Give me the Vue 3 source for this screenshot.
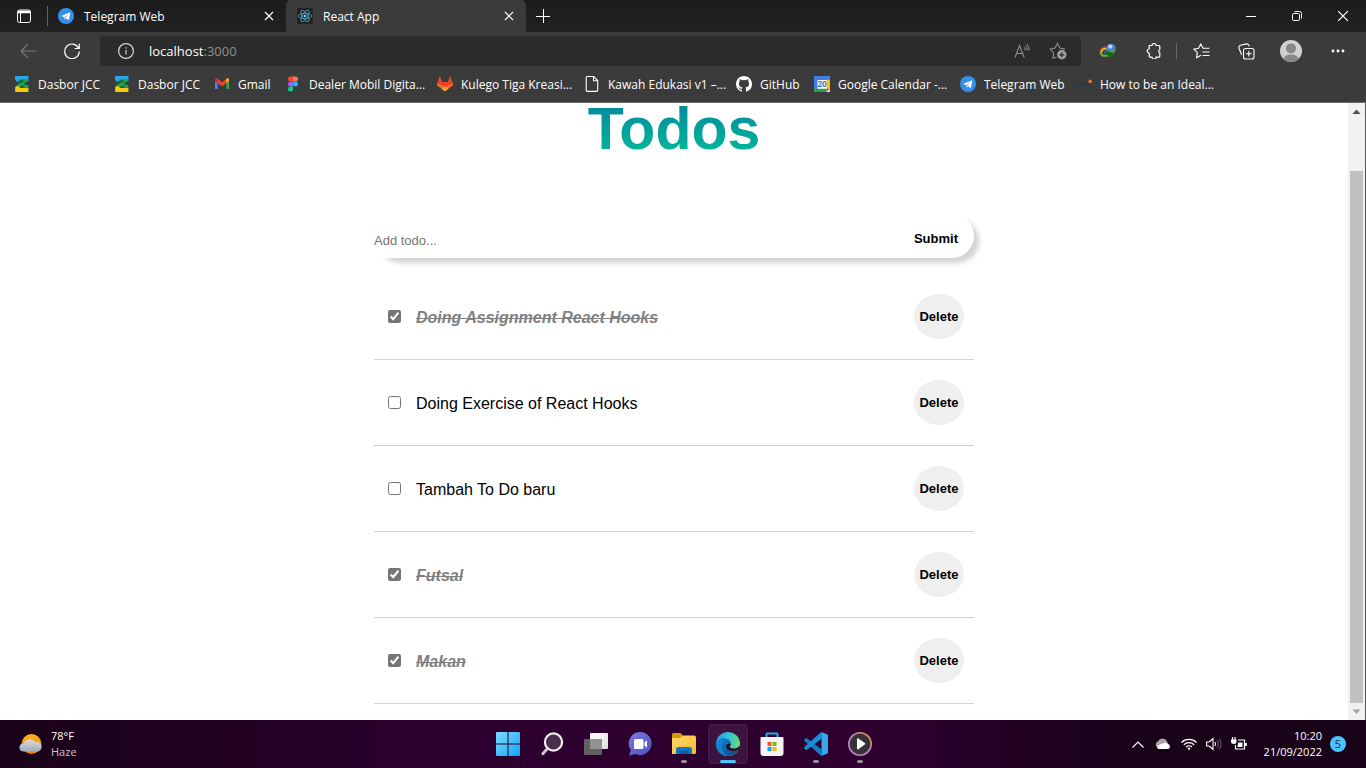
<script setup>
import { ref } from 'vue'

const bookmarks = [
  { icon: 'jcc', label: 'Dasbor JCC' },
  { icon: 'jcc', label: 'Dasbor JCC' },
  { icon: 'gmail', label: 'Gmail' },
  { icon: 'figma', label: 'Dealer Mobil Digita...' },
  { icon: 'gitlab', label: 'Kulego Tiga Kreasi...' },
  { icon: 'page', label: 'Kawah Edukasi v1 –...' },
  { icon: 'github', label: 'GitHub' },
  { icon: 'calendar', label: 'Google Calendar -...' },
  { icon: 'telegram', label: 'Telegram Web' },
  { icon: 'ideal', label: 'How to be an Ideal...' }
]

const draft = ref('')
const todos = ref([
  { id: 1, text: 'Doing Assignment React Hooks', done: true },
  { id: 2, text: 'Doing Exercise of React Hooks', done: false },
  { id: 3, text: 'Tambah To Do baru', done: false },
  { id: 4, text: 'Futsal', done: true },
  { id: 5, text: 'Makan', done: true }
])

function addTodo() {
  const text = draft.value.trim()
  if (!text) return
  todos.value.push({ id: Date.now(), text, done: false })
  draft.value = ''
}

function removeTodo(id) {
  todos.value = todos.value.filter((t) => t.id !== id)
}
</script>

<template>
  <div class="screen">
    <header class="browser">
      <div class="tabstrip">
        <button class="tab-menu" aria-label="Tab actions">
          <svg width="16" height="16" viewBox="0 0 16 16" fill="none" stroke="#fff">
            <rect x="1.5" y="2" width="13" height="12.5" rx="2" />
            <path d="M2 3.5h12M2 4.5h12" stroke-width="1.4" />
            <path d="M4.5 5v9" />
          </svg>
        </button>
        <div class="tab">
          <svg width="16" height="16" viewBox="0 0 16 16">
            <circle cx="8" cy="8" r="8" fill="#3390ec" />
            <path d="M3 8.1 12.4 4.2 10.9 12.2 8 10.2 6.6 11.6 6.4 9.3z" fill="#fff" />
            <path d="M6.4 9.3 10.3 6.3 7.2 9.8z" fill="#3390ec" />
          </svg>
          <span class="tab-title">Telegram Web</span>
          <button class="tab-close" aria-label="Close tab">
            <svg width="10" height="10" viewBox="0 0 10 10" stroke="#fff" stroke-width="1.2"><path d="M1 1l8 8M9 1l-8 8" /></svg>
          </button>
        </div>
        <div class="tab active">
          <svg width="16" height="16" viewBox="0 0 16 16" fill="none" stroke="#4fa9c4" stroke-width="0.8">
            <rect width="16" height="16" rx="2" fill="#222" stroke="none" />
            <ellipse cx="8" cy="8" rx="6.6" ry="2.6" />
            <ellipse cx="8" cy="8" rx="6.6" ry="2.6" transform="rotate(60 8 8)" />
            <ellipse cx="8" cy="8" rx="6.6" ry="2.6" transform="rotate(120 8 8)" />
            <circle cx="8" cy="8" r="1.3" fill="#61dafb" stroke="none" />
          </svg>
          <span class="tab-title">React App</span>
          <button class="tab-close" aria-label="Close tab">
            <svg width="10" height="10" viewBox="0 0 10 10" stroke="#fff" stroke-width="1.2"><path d="M1 1l8 8M9 1l-8 8" /></svg>
          </button>
        </div>
        <button class="new-tab" aria-label="New tab">
          <svg width="14" height="14" viewBox="0 0 14 14" stroke="#fff"><path d="M7.5 0v14M0 7.5h14" /></svg>
        </button>
        <div class="window-controls">
          <button aria-label="Minimize">
            <svg width="10" height="10" viewBox="0 0 10 10" stroke="#fff"><path d="M0 5.5h10" /></svg>
          </button>
          <button aria-label="Restore">
            <svg width="10" height="10" viewBox="0 0 10 10" fill="none" stroke="#fff">
              <rect x=".5" y="2.5" width="7" height="7" rx="1.2" />
              <path d="M2.6.5h5a2 2 0 0 1 2 2v5" />
            </svg>
          </button>
          <button aria-label="Close">
            <svg width="10" height="10" viewBox="0 0 10 10" stroke="#fff" stroke-width="1.2"><path d="M0 0l10 10M10 0L0 10" /></svg>
          </button>
        </div>
      </div>

      <div class="toolbar">
        <button class="nav-button" aria-label="Back">
          <svg width="16" height="16" viewBox="0 0 16 16" fill="none" stroke="#7b7b7b" stroke-width="1.1"><path d="M16 8H1M8 1 1 8l7 7" /></svg>
        </button>
        <button class="nav-button" aria-label="Refresh">
          <svg width="16" height="16" viewBox="0 0 16 16" fill="none" stroke="#fff" stroke-width="1.2">
            <path d="M14.6 5.2A7.3 7.3 0 1 0 15.3 8.6" />
            <path d="M15.3.8v4.7h-4.7" />
          </svg>
        </button>
        <div class="address">
          <button class="icon-button" aria-label="Site information">
            <svg width="16" height="16" viewBox="0 0 16 16" fill="none" stroke="#d6d6d6" stroke-width="1.2">
              <circle cx="8" cy="8" r="7.4" />
              <path d="M8 7v4.6M8 4.2v1.4" />
            </svg>
          </button>
          <span class="url">localhost<span class="port">:3000</span></span>
          <button class="icon-button read" aria-label="Read aloud">
            <svg width="16" height="16" viewBox="0 0 16 16" fill="none" stroke="#8f8f8f" stroke-width="1.1">
              <path d="M1 14.5 5.6 2.5 10.2 14.5M2.6 10.5h6" />
              <path d="M10 4.2q1.300 1.300 1 3M11.300 2.500q2.200 2 1.700 5M12.800 1q2.800 2.600 2.200 6.500" stroke-width="1" />
            </svg>
          </button>
          <button class="icon-button" aria-label="Add to favorites">
            <svg width="18" height="18" viewBox="0 0 18 18" fill="none" stroke="#8f8f8f" stroke-width="1.1">
              <path d="M7.5 15.2 4 16.2 4.6 10.9 1.2 7.1 6.1 6.1 8.5 1.5 10.9 6.1 16 7.1" />
              <circle cx="12.8" cy="12.8" r="4.7" fill="#a0a0a0" stroke="none" />
              <path d="M12.8 10.3v5M10.3 12.8h5" stroke="#2b2b2b" stroke-width="1.2" />
            </svg>
          </button>
        </div>
        <div class="tools">
          <button aria-label="Download manager">
            <svg width="18" height="16" viewBox="0 0 18 16" fill="none">
              <path d="M7.500 4.500A5 4.500 0 0 0 1.200 9.500" stroke="#d63b17" stroke-width="1.600" />
              <path d="M8 6A4 3.500 0 0 0 2.500 10" stroke="#f3c512" stroke-width="1.600" />
              <path d="M1.500 9.500Q2 14 9 12.500" stroke="#67bb2b" stroke-width="2" />
              <path d="M8 7.500Q3 9 7 11" stroke="#2a66b5" stroke-width="1.600" />
              <circle cx="12" cy="5.500" r="4.800" fill="#4b7fd0" />
              <circle cx="11.300" cy="3.600" r="2.200" fill="#b7d6ee" />
              <path d="M7.300 6.500q4.500 3 9.400-.5l-2 4H8.500z" fill="#8a9a35" />
              <path d="M6.500 7.500 17 10.500l-6.500 5v-3l-4-.8z" fill="#126d13" />
            </svg>
          </button>
          <button aria-label="Extensions">
            <svg width="16" height="16" viewBox="0 0 16 16" fill="none" stroke="#fff" stroke-width="1.2">
              <path d="M3.200 2.500H6a2 2 0 0 1 4 0h2.800a1 1 0 0 1 1 1v3.200a1.700 1.700 0 0 0 0 3.200v3.300a1 1 0 0 1-1 1H10a2 2 0 0 1-4 0H4.200a1 1 0 0 1-1-1V10a2 2 0 0 1 0-4z" stroke-linejoin="round" />
            </svg>
          </button>
          <span class="separator"></span>
          <button aria-label="Favorites">
            <svg width="17" height="16" viewBox="0 0 17 16" fill="none" stroke="#fff" stroke-width="1.1">
              <path d="M8 12.2 3.6 14.8 4.3 9.6.9 6.1 5.5 5.2 7.8 1 10 5.2h6.5M9.5 9h7M9.5 12.5h7" />
            </svg>
          </button>
          <button aria-label="Collections">
            <svg width="17" height="17" viewBox="0 0 17 17" fill="none" stroke="#fff" stroke-width="1.1">
              <rect x="5.5" y="5.5" width="10.5" height="10.5" rx="2" />
              <path d="M10.8 8v5.6M8 10.8h5.6M3.6 11.7 1 5.2Q.4 3.1 2.5 2.3L8.3.9Q10.4.4 11.2 3.3" />
            </svg>
          </button>
          <button aria-label="Profile">
            <svg width="22" height="22" viewBox="0 0 22 22">
              <defs><clipPath id="face"><circle cx="11" cy="11" r="11" /></clipPath></defs>
              <g clip-path="url(#face)">
                <rect width="22" height="22" fill="#d2d0ce" />
                <circle cx="11" cy="8.4" r="5" fill="#8a8886" />
                <ellipse cx="11" cy="19" rx="7.5" ry="4.5" fill="#8a8886" />
              </g>
            </svg>
          </button>
          <button aria-label="Settings and more">
            <svg width="14" height="4" viewBox="0 0 14 4" fill="#fff"><circle cx="2" cy="2" r="1.4" /><circle cx="7" cy="2" r="1.4" /><circle cx="12" cy="2" r="1.4" /></svg>
          </button>
        </div>
      </div>

      <nav class="bookmarks" aria-label="Favorites bar">
        <a v-for="(b, i) in bookmarks" :key="i" href="#" class="bookmark">
          <svg width="16" height="16" viewBox="0 0 16 16">
            <g v-if="b.icon === 'jcc'">
              <path d="M1 0h13.400v5L11 6H7L5.500 5 3 6 1 3.500z" fill="#25a9e8" />
              <path d="M5 3h7.500q1.500 0 1.200 1.500L9.500 8l4.900 1v3.500H1.400V10L8 5.500H5z" fill="#14a24a" />
              <path d="M1.200 11 4.500 10 6 12h8.400v4H1.200z" fill="#fcc80e" />
              <path d="M5 4.600h5L7.500 6.400zM5.500 11.500h5.500L9 10H7.500z" fill="#2d3c38" />
            </g>
            <g v-else-if="b.icon === 'gmail'">
              <path d="M1 4v9h2.6V6.5z" fill="#4285f4" />
              <path d="M12.4 6.5V13H15V4z" fill="#34a853" />
              <path d="M1 5V3.8Q1.6 1.6 3.6 2.7L8 6.2l4.4-3.5Q14.5 1.6 15 3.8V5L8 10.4z" fill="#ea4335" />
              <path d="M12.4 2.7Q14.5 1.6 15 3.8V5l-2.6 2z" fill="#fbbc04" />
              <path d="M1 5V3.8Q1.3 2.5 2.4 2.3L3.6 7z" fill="#c5221f" />
            </g>
            <g v-else-if="b.icon === 'figma'">
              <path d="M8 .5H5.5a2.5 2.5 0 0 0 0 5H8z" fill="#f24e1e" />
              <path d="M8 .5h2.5a2.5 2.5 0 0 1 0 5H8z" fill="#ff7262" />
              <path d="M8 5.5H5.5a2.5 2.5 0 0 0 0 5H8z" fill="#a259ff" />
              <circle cx="10.5" cy="8" r="2.5" fill="#1abcfe" />
              <path d="M8 10.5H5.5A2.5 2.5 0 1 0 8 13z" fill="#0acf83" />
            </g>
            <g v-else-if="b.icon === 'gitlab'">
              <path d="M8 15.3 0 9.3.2 7.8 2.8.4 5.1 6.1h5.8L13.2.4l2.6 7.4.2 1.5z" fill="#fc6d26" />
              <path d="M.2 7.8 2.8.4 5.1 6.1h5.8L13.2.4l2.6 7.4-4 1L8 11.6 4.2 8.8z" fill="#e24329" />
              <path d="M4.6 12.7 8 10.4l3.4 2.3L8 15.3z" fill="#fca326" />
            </g>
            <g v-else-if="b.icon === 'page'" fill="none" stroke="#fff" stroke-width="1.1">
              <path d="M3.5.5h6.2l4 4V14a1.4 1.4 0 0 1-1.4 1.4H3.6A1.4 1.4 0 0 1 2.2 14V2A1.4 1.4 0 0 1 3.5.5zM9.5.8v4h4" />
            </g>
            <path v-else-if="b.icon === 'github'" fill="#fff" d="M8 0C3.58 0 0 3.58 0 8c0 3.54 2.29 6.53 5.47 7.59.4.07.55-.17.55-.38v-1.34c-2.23.48-2.7-1.07-2.7-1.07-.36-.93-.89-1.17-.89-1.17-.73-.5.05-.49.05-.49.8.06 1.23.83 1.23.83.71 1.22 1.87.87 2.33.66.07-.52.28-.87.5-1.07-1.77-.2-3.64-.89-3.64-3.95 0-.87.31-1.59.82-2.15-.08-.2-.36-1.02.08-2.12 0 0 .67-.21 2.2.82a7.6 7.6 0 0 1 4 0c1.53-1.04 2.2-.82 2.2-.82.44 1.1.16 1.92.08 2.12.51.56.82 1.27.82 2.15 0 3.07-1.87 3.75-3.65 3.95.29.25.54.73.54 1.48v2.2c0 .21.15.46.55.38A8 8 0 0 0 16 8c0-4.42-3.58-8-8-8z" />
            <g v-else-if="b.icon === 'calendar'">
              <rect width="16" height="16" rx="1" fill="#fff" />
              <path d="M0 1a1 1 0 0 1 1-1h14a1 1 0 0 1 1 1v3H3.5v9H0z" fill="#3f7ee8" />
              <path d="M12.6 3.8H16v9h-3.4z" fill="#fbbc04" />
              <path d="M0 12.8h12.6V16H1a1 1 0 0 1-1-1z" fill="#2c9f4b" />
              <path d="M12.6 12.8H16L12.6 16z" fill="#ea4335" />
              <text x="3.500" y="11" font-size="8" font-weight="700" fill="#3472dc">20</text>
            </g>
            <g v-else-if="b.icon === 'telegram'">
              <circle cx="8" cy="8" r="8" fill="#3390ec" />
              <path d="M3 8.1 12.4 4.2 10.9 12.2 8 10.2 6.6 11.6 6.4 9.3z" fill="#fff" />
              <path d="M6.4 9.3 10.3 6.3 7.2 9.8z" fill="#3390ec" />
            </g>
            <g v-else>
              <path d="M0 7.700h13M0 9h13" stroke="#23395f" stroke-width="1.200" />
              <circle cx="14.2" cy="5.4" r="1.8" fill="#f3701f" />
            </g>
          </svg>
          <span>{{ b.label }}</span>
        </a>
      </nav>
    </header>

    <div class="viewport">
      <main class="page">
        <h1>Todos</h1>
        <form class="todo-form" @submit.prevent="addTodo">
          <input v-model="draft" type="text" placeholder="Add todo..." aria-label="Add todo" />
          <button type="submit">Submit</button>
        </form>
        <ul class="todo-list">
          <li v-for="t in todos" :key="t.id" class="todo">
            <label :class="{ done: t.done }">
              <input v-model="t.done" type="checkbox" />
              <span>{{ t.text }}</span>
            </label>
            <button @click="removeTodo(t.id)">Delete</button>
          </li>
        </ul>
      </main>
      <div class="scrollbar" aria-hidden="true">
        <svg width="17" height="17" viewBox="0 0 17 17"><path d="M4.5 11h8l-4-4.4z" fill="#505050" /></svg>
        <div class="track"><div class="thumb"></div></div>
        <svg width="17" height="17" viewBox="0 0 17 17"><path d="M4.5 6.5h8l-4 4.4z" fill="#a3a3a3" /></svg>
      </div>
    </div>

    <footer class="taskbar">
      <div class="weather">
        <svg width="24" height="24" viewBox="0 0 24 24">
          <defs>
            <linearGradient id="sun" x1="0" y1="0" x2="0" y2="1"><stop offset="0" stop-color="#ffb411" /><stop offset="1" stop-color="#f27b1d" /></linearGradient>
            <linearGradient id="haze" x1="0" y1="0" x2="0" y2="1"><stop offset="0" stop-color="#dddcd5" /><stop offset="1" stop-color="#9eabbd" /></linearGradient>
          </defs>
          <circle cx="12.5" cy="12" r="10" fill="url(#sun)" />
          <path d="M4.5 19.5a4 4 0 0 1 0-8 7 7 0 0 1 12-1.5 4.9 4.9 0 0 1 2.5 9.5z" fill="url(#haze)" />
        </svg>
        <div><div>78°F</div><div class="condition">Haze</div></div>
      </div>

      <nav class="apps" aria-label="Taskbar">
        <button class="app" aria-label="Start">
          <svg width="24" height="24" viewBox="0 0 24 24">
            <defs><linearGradient id="win" x1="0" y1="0" x2="1" y2="1"><stop offset="0" stop-color="#7bdcff" /><stop offset="1" stop-color="#12a5f4" /></linearGradient></defs>
            <path d="M0 1a1 1 0 0 1 1-1h10.5v11.5H0zM12.5 0H23a1 1 0 0 1 1 1v10.5H12.5zM0 12.5h11.5V24H1a1 1 0 0 1-1-1zM12.5 12.5H24V23a1 1 0 0 1-1 1H12.5z" fill="url(#win)" />
          </svg>
        </button>
        <button class="app" aria-label="Search">
          <svg width="24" height="24" viewBox="0 0 24 24" fill="none" stroke="#eee">
            <path d="M7.5 16.5 2.8 21.7" stroke-width="2.8" stroke-linecap="round" stroke="#d0ced0" />
            <circle cx="13.5" cy="10" r="8.6" stroke-width="2.2" fill="#4c2c4c" />
          </svg>
        </button>
        <button class="app" aria-label="Task view">
          <svg width="24" height="24" viewBox="0 0 24 24">
            <defs><linearGradient id="pane" x1="0" y1="0" x2="1" y2="1"><stop offset="0" stop-color="#fff" /><stop offset="1" stop-color="#dedede" /></linearGradient></defs>
            <rect x="6" y="1" width="18" height="16" rx="1" fill="url(#pane)" />
            <rect x="0" y="7" width="18" height="16" rx="1" fill="#626062" />
            <path d="M6 7h12v10H6z" fill="#929292" />
          </svg>
        </button>
        <button class="app" aria-label="Chat">
          <svg width="24" height="24" viewBox="0 0 24 24">
            <defs><linearGradient id="chat" x1="0" y1="0" x2="1" y2="1"><stop offset="0" stop-color="#7d78df" /><stop offset="1" stop-color="#4c51bb" /></linearGradient></defs>
            <path d="M12.5 0a11.5 11.5 0 1 1-5 22L1 23.6l1.8-5.6A11.5 11.5 0 0 1 12.5 0z" fill="url(#chat)" />
            <rect x="6" y="7" width="9.5" height="10" rx="1.5" fill="#fff" />
            <path d="M16.5 10.5 19 8.2v7.6l-2.5-2.3z" fill="#fff" />
          </svg>
        </button>
        <button class="app running" aria-label="File Explorer">
          <svg width="24" height="24" viewBox="0 0 24 24">
            <defs><linearGradient id="folder" x1="0" y1="0" x2="1" y2="1"><stop offset="0" stop-color="#ffd969" /><stop offset="1" stop-color="#f7b92c" /></linearGradient></defs>
            <path d="M0 2.5A1.5 1.5 0 0 1 1.5 1h7L11 3.8 9 8H0z" fill="#dc9607" />
            <path d="M0 6h8l3-2.5h11A2 2 0 0 1 24 5.5v15A1.5 1.5 0 0 1 22.5 22H0z" fill="url(#folder)" />
            <path d="M4 22v-4.500A2.500 2.500 0 0 1 6.500 15h11a2.500 2.500 0 0 1 2.500 2.500V22z" fill="#087bcb" />
            <path d="M7 18.500h10V22H7z" fill="#075fa8" />
          </svg>
        </button>
        <button class="app running active" aria-label="Microsoft Edge">
          <svg width="24" height="24" viewBox="0 0 24 24">
            <defs>
              <linearGradient id="edgeTop" x1="0" y1=".3" x2="1" y2=".5"><stop offset="0" stop-color="#249ce0" /><stop offset=".5" stop-color="#31c5d5" /><stop offset="1" stop-color="#65df65" /></linearGradient>
              <linearGradient id="edgeLow" x1="0" y1="0" x2="1" y2="1"><stop offset="0" stop-color="#1387d5" /><stop offset="1" stop-color="#103f83" /></linearGradient>
            </defs>
            <circle cx="12" cy="12" r="12" fill="url(#edgeTop)" />
            <path d="M.1 11C1.500 7.500 5 6 8.500 6.300c4.300.3 6.500 3 6.500 5.500-1.500-1.500-5-.8-5 2.400 0 3.800 5.800 6.300 12.300 3.900A12 12 0 0 1 0 12z" fill="url(#edgeLow)" />
            <path d="M8.500 8.500C4 11 4.500 20.500 12 24A12 12 0 0 1 .1 11C2 8 5.500 7 8.500 8.500z" fill="#1483cd" />
            <path d="M15 12c0 1.500-1.300 1.700-1.300 2.600 0 1.500 3 2.400 6 1.700 1.500-.3 2.500-1 3.300-2l1.500 0-1.600 3.700C17 20.300 10 18.700 10 14.400c0-3.400 4-4 5-2.400z" fill="#2b0930" />
          </svg>
        </button>
        <button class="app" aria-label="Microsoft Store">
          <svg width="24" height="24" viewBox="0 0 24 24">
            <path d="M6.5 6V2.200A.7.7 0 0 1 7.200 1.500h9.600a.7.7 0 0 1 .7.7V6" fill="none" stroke="#24aee4" stroke-width="2" />
            <path d="M.5 6A1 1 0 0 1 1.500 5h21a1 1 0 0 1 1 1v15a3 3 0 0 1-3 3h-17a3 3 0 0 1-3-3z" fill="#f4f4f4" />
            <path d="M7.500 10h4v4h-4z" fill="#f25022" /><path d="M12.500 10h4v4h-4z" fill="#7fba00" />
            <path d="M7.500 15h4v4h-4z" fill="#00a4ef" /><path d="M12.500 15h4v4h-4z" fill="#ffb900" />
          </svg>
        </button>
        <button class="app running" aria-label="Visual Studio Code">
          <svg width="24" height="24" viewBox="0 0 24 24">
            <path d="M17.500 0 24 2.700v18.600L17.500 24z" fill="#35a9ec" />
            <path d="M0 7.800 1.800 6.200q.6-.4 1.200 0L17.800 17.600V24Q17 24 16.300 23.300L.2 8.700z" fill="#127ac0" />
            <path d="M0 16.200 1.800 17.800q.6.400 1.200 0L17.800 6.400V0Q17 0 16.300.7L.2 15.300z" fill="#1b8fd5" />
          </svg>
        </button>
        <button class="app running" aria-label="Media Player">
          <svg width="24" height="24" viewBox="0 0 24 24">
            <defs><linearGradient id="ring" x1="1" y1="0" x2="0" y2="1"><stop offset="0" stop-color="#ef923e" /><stop offset=".5" stop-color="#c484bd" /><stop offset="1" stop-color="#c47bd7" /></linearGradient></defs>
            <circle cx="12" cy="12" r="11.200" fill="#343437" stroke="url(#ring)" stroke-width="1.600" />
            <path d="M9 7.200q0-1.400 1.300-.8l6.500 4.600q1 .8 0 1.600l-6.500 4.600Q9 17.800 9 16.400z" fill="#fff" />
          </svg>
        </button>
      </nav>

      <div class="tray">
        <svg width="12" height="7" viewBox="0 0 12 7" fill="none" stroke="#fff" stroke-width="1.200"><path d="M.5 6.500 6 1l5.500 5.500" /></svg>
        <svg width="16" height="12" viewBox="0 0 16 12">
          <path d="M3.500 10A3.500 3.500 0 0 1 3 3.300 5 5 0 0 1 12 3.200L13 6z" fill="#aaa4aa" />
          <path d="M3 11a2.800 2.800 0 0 1 0-3.600l5-2.100q3-1.300 4.500.5A2.800 2.800 0 0 1 13.500 11z" fill="#fff" />
        </svg>
        <svg width="16" height="12" viewBox="0 0 16 12" fill="none" stroke="#fff" stroke-width="1.200">
          <path d="M.5 4.500a10.500 10.500 0 0 1 15 0M2.800 6.900a7.300 7.300 0 0 1 10.400 0M5 9a4.300 4.300 0 0 1 6 0" />
          <circle cx="8" cy="10.600" r="1.200" fill="#fff" stroke="none" />
        </svg>
        <svg width="16" height="14" viewBox="0 0 16 14" fill="none" stroke="#fff" stroke-width="1.100">
          <path d="M.6 5v4h2.600L7 12.500v-11L3.200 5zM9 5q1.300 2 0 4" />
          <path d="M11 3.200q2.600 3.800 0 7.600M13 1.500q4 5.500 0 11" stroke="#5f535f" />
        </svg>
        <svg width="16" height="14" viewBox="0 0 16 14" fill="none" stroke="#fff" stroke-width="1.200">
          <path d="M7 3h6.500v9H4.500V8" />
          <path d="M7 5.500h4.500v4.500H6.500zM14 6h1.800v3H14zM0 2.500h5.500V5Q5.500 7 2.800 7T0 5z" fill="#fff" stroke="none" />
          <path d="M1.500 0v3M4 0v3" />
        </svg>
        <div class="clock"><div>10:20</div><div>21/09/2022</div></div>
        <span class="badge">5</span>
      </div>
    </footer>
  </div>
</template>

<style>
body {
  margin: 0;
}
</style>

<style scoped>
.screen {
  display: flex;
  flex-direction: column;
  height: 100vh;
  overflow: hidden;
  font-family: "Open Sans", "Noto Sans", sans-serif;
  font-size: 12px;
  color: #fff;
}

button {
  display: flex;
  align-items: center;
  justify-content: center;
  padding: 0;
  border: 0;
  background: none;
  color: inherit;
  font: inherit;
}

svg {
  flex: none;
}

.browser {
  background: #3b3b3b;
  border-bottom: 1px solid #6b6b6b;
}

.tabstrip {
  display: flex;
  height: 32px;
  background: linear-gradient(#1c1c1c, #212121);
}

.tab-menu {
  width: 47px;
}

.tab {
  display: flex;
  align-items: center;
  box-sizing: border-box;
  width: 240px;
  padding: 0 12px 0 11px;
  background: linear-gradient(#636363, #636363) 0 50% / 1px 20px no-repeat;
}

.tab.active {
  background: #3b3b3b;
  border-radius: 5px 5px 0 0;
}

.tab-menu + .tab {
  width: 239px;
}

.tab-title {
  flex: 1;
  padding-left: 10px;
}

.new-tab {
  width: 34px;
}

.window-controls {
  display: flex;
  margin-left: auto;
}

.window-controls button {
  width: 46px;
}

.toolbar {
  display: flex;
  align-items: center;
  height: 34px;
  padding-left: 6px;
}

.nav-button {
  width: 44px;
  height: 34px;
  padding-top: 4px;
}

.address {
  display: flex;
  flex: 1;
  align-items: center;
  height: 30px;
  margin: 4px 0 0 6px;
  padding: 0 14px 0 18px;
  background: #2b2b2b;
  border-radius: 4px;
}

.url {
  flex: 1;
  padding-left: 15px;
  font-size: 13px;
}

.port {
  color: #8f8f8f;
}

.read {
  margin-right: 19px;
}

.tools {
  display: grid;
  grid-template-columns: 46px 45px 2px 47px 42px 48px 46px;
  align-items: center;
  padding: 4px 5px 0 4px;
}

.separator {
  width: 1px;
  height: 16px;
  background: #666;
}

.bookmarks {
  display: grid;
  grid-template-columns: 100px 100px 71px 152px 147px 152px 78px 146px 116px 1fr;
  align-items: center;
  height: 36px;
  padding-left: 14px;
}

.bookmark {
  display: flex;
  align-items: center;
  gap: 8px;
  color: #fff;
  text-decoration: none;
  white-space: nowrap;
}

.viewport {
  display: flex;
  flex: 1;
  min-height: 0;
  background: #fff;
}

.page {
  flex: 1;
  overflow: clip;
  overflow-clip-margin: 12px;
  font-family: "Liberation Sans", Arial, sans-serif;
  font-size: 16px;
  color: #000;
}

h1 {
  width: fit-content;
  margin: 0 auto 59px;
  font-size: 59px;
  line-height: 52px;
  color: transparent;
  background: linear-gradient(#0489a0, #02b996);
  background-clip: text;
}

.todo-form {
  display: flex;
  width: 600px;
  max-width: 100%;
  height: 44px;
  margin: 0 auto 16px;
  border-radius: 22px;
  box-shadow: 5px 5px 5px #d3d3d3;
}

.todo-form input {
  flex: 1;
  min-width: 0;
  padding: 8px 0 0;
  border: 0;
  outline: 0;
  background: #fff;
  font: 13px "Liberation Sans", Arial, sans-serif;
}

.todo-form input::placeholder {
  color: #757575;
}

.todo-form button {
  padding: 4px 16px 0;
  font-size: 13px;
  font-weight: 700;
}

.todo-list {
  width: 600px;
  max-width: 100%;
  margin: 0 auto;
  padding: 0;
  list-style: none;
}

.todo {
  display: flex;
  align-items: center;
  justify-content: space-between;
  padding: 20px 10px 20px 14px;
  border-bottom: 1px solid #d3d3d3;
}

.todo label {
  display: flex;
  align-items: center;
  gap: 15px;
}

.todo label span {
  padding-top: 2px;
}

.todo label input {
  width: 13px;
  height: 13px;
  margin: 0;
  accent-color: #757575;
}

.todo label.done {
  color: #808080;
  font-style: italic;
  font-weight: 700;
  text-decoration: line-through;
}

.todo button {
  width: 50px;
  height: 45px;
  border-radius: 50%;
  background: #efefef;
  font-size: 13px;
  font-weight: 700;
}

.scrollbar {
  display: flex;
  flex-direction: column;
  width: 17px;
  background: #f1f1f1;
  border-right: 1px solid #555;
}

.track {
  flex: 1;
  padding: 51px 2px 0;
}

.thumb {
  height: 100%;
  box-sizing: border-box;
  background: #c1c1c1;
}

.taskbar {
  position: relative;
  display: grid;
  flex: none;
  grid-template-columns: 1fr auto 1fr;
  align-items: center;
  height: 48px;
  background: linear-gradient(90deg, #190318, #2d0030 36%, #2d0030 64%, #190318 84%);
  font-size: 11px;
  line-height: 16px;
}

.weather {
  display: flex;
  align-items: center;
  gap: 8px;
  padding-left: 19px;
}

.condition {
  color: #c9c3c9;
}

.apps {
  display: flex;
  gap: 4px;
  padding-left: 1px;
}

.app {
  position: relative;
  box-sizing: border-box;
  width: 40px;
  height: 40px;
  border-radius: 4px;
}

.app.active {
  background: #3d1440;
  border: 1px solid #46204a;
}

.app.running::after {
  content: "";
  position: absolute;
  bottom: 1px;
  width: 6px;
  height: 3px;
  border-radius: 2px;
  background: #9b8a9d;
}

.app.active::after {
  bottom: 0;
  width: 16px;
  background: #4cc2ff;
}

.tray {
  display: grid;
  grid-template-columns: 24px 26px 26px 24px 26px 74px 24px;
  align-items: center;
  justify-items: center;
  justify-content: end;
  padding-right: 16px;
}

.clock {
  justify-self: end;
  padding-right: 4px;
  text-align: right;
}

.badge {
  width: 16px;
  height: 16px;
  border-radius: 50%;
  background: #4cc2ff;
  color: #16303f;
  text-align: center;
}
</style>
